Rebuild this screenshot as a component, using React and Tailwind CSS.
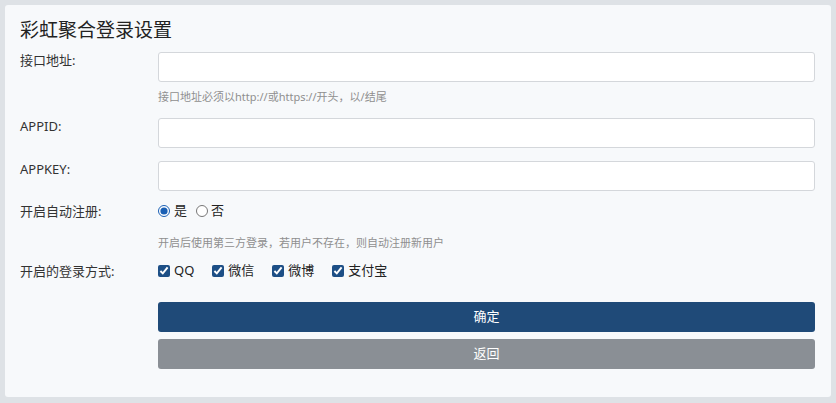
import React from "react";

const font = { fontFamily: '"Noto Sans", "Noto Sans CJK SC", sans-serif' };

function Label({ children }) {
  return (
    <div className="w-[138px] shrink-0 text-[13px] leading-[17px] text-[#333]">{children}</div>
  );
}

function Input() {
  return (
    <input
      type="text"
      className="block h-[30px] w-full rounded-[3px] border border-[#d4d7db] bg-white px-2 text-[13px] outline-none"
    />
  );
}

export default function App() {
  const checks = ["QQ", "微信", "微博", "支付宝"];
  return (
    <div className="min-h-[403px] w-full bg-[#dee2e6] pt-[5px] pb-[6px] px-[5px]" style={font}>
      <div className="rounded-[3px] bg-[#f7f9fb] pt-[9px] pl-[15px] pr-[16px] pb-[28px]">
        <div className="mb-[6px] text-[19px] leading-[32px] text-[#222]">彩虹聚合登录设置</div>

        <div className="flex">
          <Label>接口地址:</Label>
          <div className="flex-1">
            <Input />
            <div className="mt-[8px] text-[11px] leading-[14px] text-[#8f8f8f]">
              接口地址必须以http://或https://开头，以/结尾
            </div>
          </div>
        </div>

        <div className="mt-[14px] flex">
          <Label>APPID:</Label>
          <div className="flex-1">
            <Input />
          </div>
        </div>

        <div className="mt-[13px] flex">
          <Label>APPKEY:</Label>
          <div className="flex-1">
            <Input />
          </div>
        </div>

        <div className="mt-[10px] flex items-center h-[20px]">
          <Label>开启自动注册:</Label>
          <div className="flex flex-1 items-center text-[13px] text-[#222]">
            <label className="flex items-center">
              <input type="radio" name="reg" defaultChecked className="m-0 h-[12px] w-[12px] accent-[#1a5fb4]" />
              <span className="ml-[4px]">是</span>
            </label>
            <label className="ml-[9px] flex items-center">
              <input type="radio" name="reg" className="m-0 h-[12px] w-[12px] accent-[#1a5fb4]" />
              <span className="ml-[3px]">否</span>
            </label>
          </div>
        </div>
        <div className="mt-[15px] flex">
          <div className="w-[138px] shrink-0" />
          <div className="flex-1 text-[11px] leading-[14px] text-[#8f8f8f]">
            开启后使用第三方登录，若用户不存在，则自动注册新用户
          </div>
        </div>

        <div className="mt-[11px] flex items-center h-[20px]">
          <Label>开启的登录方式:</Label>
          <div className="flex flex-1 items-center gap-[18px] text-[13px] text-[#222]">
            {checks.map((c) => (
              <label key={c} className="flex items-center">
                <input type="checkbox" defaultChecked className="m-0 h-[12px] w-[12px] accent-[#1d4f86]" />
                <span className="ml-[4px]">{c}</span>
              </label>
            ))}
          </div>
        </div>

        <div className="mt-[21px] flex">
          <div className="w-[138px] shrink-0" />
          <div className="flex flex-1 flex-col gap-[7px]">
            <button className="h-[30px] w-full rounded-[3px] bg-[#1f4a78] text-[13px] text-white">确定</button>
            <button className="h-[30px] w-full rounded-[3px] bg-[#8a8f95] text-[13px] text-white">返回</button>
          </div>
        </div>
      </div>
    </div>
  );
}
